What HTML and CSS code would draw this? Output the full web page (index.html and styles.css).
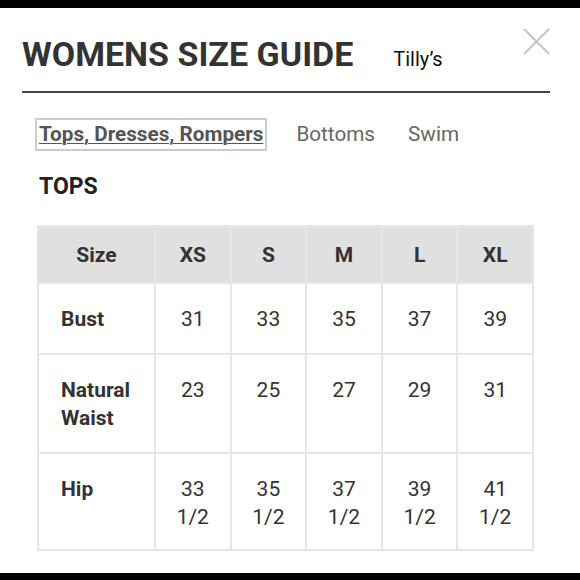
FILE: index.html
```html
<!DOCTYPE html>
<html lang="en">
<head>
<meta charset="utf-8">
<title>Womens Size Guide</title>
<link rel="stylesheet" href="styles.css">
</head>
<body>
<div class="page">
  <header class="guide-header">
    <h1 class="guide-title">WOMENS SIZE GUIDE</h1>
    <span class="brand">Tilly’s</span>
    <button class="close" aria-label="Close">
      <svg width="27" height="27" viewBox="0 0 27 27"><path d="M1 1L26 26M26 1L1 26" stroke="#c4c4c4" stroke-width="2" fill="none"/></svg>
    </button>
  </header>
  <section class="guide-body">
    <nav class="tabs">
      <a class="tab active">Tops, Dresses, Rompers</a>
      <a class="tab">Bottoms</a>
      <a class="tab">Swim</a>
    </nav>
    <h2 class="section-title">TOPS</h2>
    <table class="size-table">
      <colgroup><col class="col-label"><col><col><col><col><col></colgroup>
      <thead>
        <tr><th>Size</th><th>XS</th><th>S</th><th>M</th><th>L</th><th>XL</th></tr>
      </thead>
      <tbody>
        <tr><th>Bust</th><td>31</td><td>33</td><td>35</td><td>37</td><td>39</td></tr>
        <tr><th>Natural Waist</th><td>23</td><td>25</td><td>27</td><td>29</td><td>31</td></tr>
        <tr><th>Hip</th><td>33 1/2</td><td>35 1/2</td><td>37 1/2</td><td>39 1/2</td><td>41 1/2</td></tr>
      </tbody>
    </table>
  </section>
</div>
</body>
</html>
```

FILE: styles.css
```css
html, body {
  margin: 0;
  padding: 0;
  background: #000;
}
body {
  font-family: Roboto, "Liberation Sans", sans-serif;
  color: #333;
}
.page {
  margin-top: 8px;
  height: 565px;
  background: #fff;
  overflow: hidden;
}
.guide-header {
  display: flex;
  align-items: baseline;
  margin: 0 30px 0 22px;
  padding-top: 20px;
  padding-bottom: 17px;
  border-bottom: 2px solid #444;
}
.guide-title {
  margin: 6px 0 0;
  font-size: 34px;
  line-height: 40px;
  font-weight: 700;
  color: #333;
  letter-spacing: 0;
}
.brand {
  margin-left: 40px;
  font-size: 20px;
  color: #111;
}
.close {
  margin-left: auto;
  align-self: flex-start;
  padding: 0;
  border: 0;
  background: none;
  width: 27px;
  height: 27px;
  display: block;
}
.close svg { display: block; }
.guide-body {
  padding: 25px 47px 0 35px;
}
.tabs {
  display: flex;
  gap: 25px;
}
.tab {
  font-size: 20.7px;
  line-height: 29px;
  padding: 0 2px;
  border: 2px solid transparent;
  color: #666;
}
.tab.active {
  font-weight: 700;
  color: #555;
  text-decoration: underline;
  text-decoration-thickness: 1px;
  text-underline-offset: 2px;
  border-color: #ccc;
}
.section-title {
  margin: 22px 0 0 4px;
  font-size: 23px;
  line-height: 28px;
  font-weight: 700;
  color: #222;
}
.size-table {
  margin: 24px 0 0 2px;
  width: 497px;
  border-collapse: collapse;
  table-layout: fixed;
}
.col-label { width: 117px; }
.size-table th,
.size-table td {
  border: 2px solid #e6e6e6;
  font-size: 21px;
  line-height: 28px;
  color: #333;
}
.size-table thead th {
  background: #e0e0e0;
  height: 55px;
  padding: 0;
  text-align: center;
  vertical-align: middle;
  font-weight: 700;
}
.size-table tbody th,
.size-table tbody td {
  padding: 21px 0 20px;
  vertical-align: top;
}
.size-table tbody tr:last-child th,
.size-table tbody tr:last-child td {
  padding-bottom: 18px;
}
.size-table tbody th {
  text-align: left;
  padding-left: 22px;
  font-weight: 700;
}
.size-table tbody td {
  text-align: center;
  padding-left: 14px;
  padding-right: 14px;
}
```
